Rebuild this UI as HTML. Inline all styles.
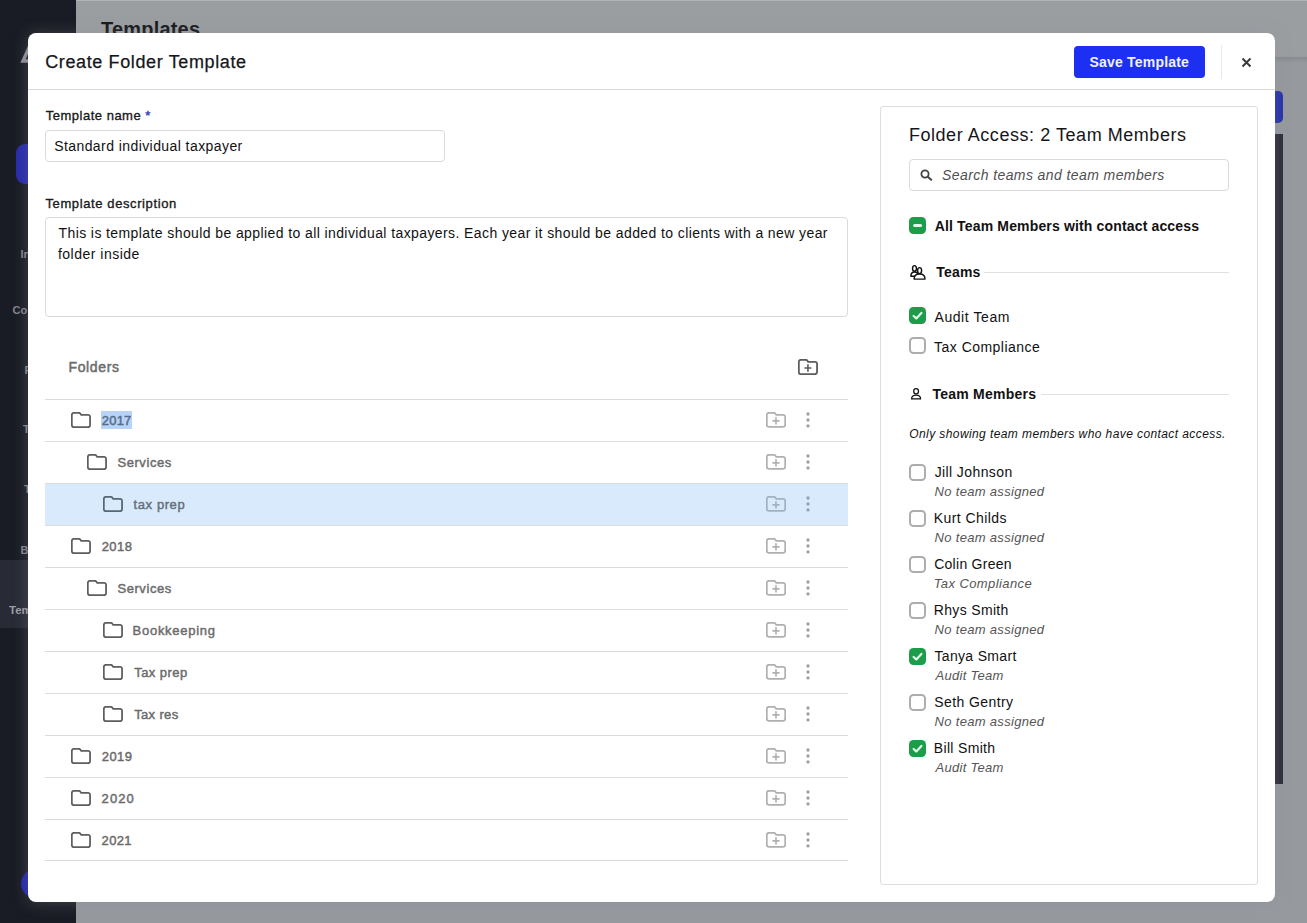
<!DOCTYPE html>
<html><head><meta charset="utf-8"><title>Create Folder Template</title>
<style>
*{box-sizing:border-box;margin:0;padding:0}
html,body{width:1307px;height:923px;overflow:hidden}
body{font-family:"Liberation Sans",sans-serif;position:relative;background:#96999e;color:#1c1c1c}
.abs,.t,.fi,.cb,.ln{position:absolute}
.t{white-space:nowrap;line-height:1}
.side{left:0;top:0;width:76px;height:923px;background:#1a1c25}
.bghead{left:76px;top:0;width:1231px;height:57px;background:#9b9ea1}
.bgshadow{left:76px;top:57px;width:1231px;height:6px;background:linear-gradient(180deg,#878a8e,#96999e)}
.modal{left:28px;top:33px;width:1247px;height:868.7px;background:#fff;border-radius:8px;box-shadow:0 1px 16px rgba(140,142,150,.34)}
.ln{background:#dcdcdc;height:1px}
.cb{width:17px;height:17px;border-radius:4.5px}
.cb.off{border:2px solid #adadad;background:#fff}
.cb.on{background:#1b9d4a}
.cb svg{display:block}
.row{position:absolute;left:45px;width:803px;height:42px;border-top:1px solid #dcdcdc}
</style></head><body>
<div class="abs side"></div>
<div class="abs bghead"></div>
<div class="abs bgshadow"></div>
<div class="abs" style="left:76px;top:0;width:1231px;height:1px;background:#b1b3b5"></div>
<div class="t" style="left:101px;top:19px;font-size:20px;font-weight:700;color:#17181c;letter-spacing:0.2px">Templates</div>
<div class="abs" style="left:16px;top:144px;width:30px;height:40px;background:#272ca9;border-radius:9px"></div>
<div class="abs" style="left:0;top:560px;width:76px;height:68px;background:#282a35"></div>
<div class="abs" style="left:20.8px;top:869px;width:29px;height:29px;background:#2326a8;border-radius:15px"></div>
<div class="abs" style="left:1260px;top:91px;width:23px;height:32px;background:#2531ad;border-radius:5px"></div>
<div class="abs" style="left:1260px;top:134px;width:23px;height:650px;background:#2a2b36"></div>

<div class="t" style="left:20.5px;top:249px;font-size:11px;font-weight:700;color:#85868d">In</div>
<div class="t" style="left:12.5px;top:305px;font-size:11px;font-weight:700;color:#85868d">Co</div>
<div class="t" style="left:24.5px;top:365px;font-size:11px;font-weight:700;color:#85868d">F</div>
<div class="t" style="left:23px;top:424px;font-size:11px;font-weight:700;color:#85868d">T</div>
<div class="t" style="left:24px;top:484px;font-size:11px;font-weight:700;color:#85868d">T</div>
<div class="t" style="left:20.5px;top:545px;font-size:11px;font-weight:700;color:#85868d">B</div>
<div class="t" style="left:9px;top:604.5px;font-size:11.5px;font-weight:700;color:#9d9ea4">Tem</div>
<svg class="fi" style="left:20px;top:40px" width="14" height="24" viewBox="0 0 14 24"><path d="M12 1 L3 21 H12" fill="none" stroke="#8f9097" stroke-width="3.4"/></svg>

<div class="abs modal"></div>
<div class="t" id="title" style="left:45.25px;top:53px;font-size:18px;color:#15161a;letter-spacing:0.620px;-webkit-text-stroke:0.25px currentColor">Create Folder Template</div>
<div class="ln" style="left:28px;top:89px;width:1247px;background:#d9d9d9"></div>
<div class="abs" style="left:1074px;top:46px;width:131px;height:32px;background:#1c2ff3;border-radius:4px"></div>
<div class="t" id="save" style="left:1089.53px;top:55px;font-size:14px;color:#f1f2ff;letter-spacing:0.198px;font-weight:700">Save Template</div>
<div class="abs" style="left:1221px;top:45px;width:1px;height:34px;background:#e9e9e9"></div>
<svg class="fi" style="left:1241px;top:57px" width="11" height="11" viewBox="0 0 11 11"><path d="M1.5 1.5 L9.5 9.5 M9.5 1.5 L1.5 9.5" stroke="#3a3a3a" stroke-width="2" fill="none"/></svg>

<div class="t" id="lbl1" style="left:45.77px;top:109px;font-size:13px;color:#1a1a1a;letter-spacing:0.502px;-webkit-text-stroke:0.35px currentColor">Template name <span style="color:#2b35b8">*</span></div>
<div class="abs" style="left:45px;top:130px;width:400px;height:32px;border:1px solid #dadada;border-radius:4px"></div>
<div class="t" id="inp1" style="left:54.17px;top:139px;font-size:14px;color:#111;letter-spacing:0.424px">Standard individual taxpayer</div>
<div class="t" id="lbl2" style="left:45.48px;top:197px;font-size:13px;color:#1a1a1a;letter-spacing:0.607px;-webkit-text-stroke:0.35px currentColor">Template description</div>
<div class="abs" style="left:45px;top:217px;width:803px;height:100px;border:1px solid #dadada;border-radius:4px"></div>
<div class="t" id="ta1" style="left:58.52px;top:226px;font-size:14px;color:#111;letter-spacing:0.403px">This is template should be applied to all individual taxpayers. Each year it should be added to clients with a new year</div>
<div class="t" id="ta2" style="left:57.95px;top:247px;font-size:14px;color:#111;letter-spacing:0.498px">folder inside</div>
<div class="t" id="folders" style="left:68.53px;top:360px;font-size:14px;color:#6c6c6c;letter-spacing:0.633px;-webkit-text-stroke:0.5px currentColor">Folders</div>
<svg class="fi" style="left:798.3px;top:359px" width="19.9" height="16" viewBox="0 0 19.5 15.2" preserveAspectRatio="none"><path d="M0.8 3 Q0.8 0.8 3 0.8 H7.6 Q8.5 0.8 9 1.45 L10 2.75 H16.5 Q18.7 2.7 18.7 4.9 V12.2 Q18.7 14.4 16.5 14.4 H3 Q0.8 14.4 0.8 12.2 Z" fill="none" stroke="#5c5c5c" stroke-width="1.8" stroke-linejoin="round"/><path d="M9.75 5.1 V12 M6.3 8.55 H13.2" stroke="#5c5c5c" stroke-width="1.6" fill="none"/></svg>
<div class="row" style="top:399px;"></div>
<svg class="fi" style="left:71.3px;top:412.1px" width="19.9" height="16.1" viewBox="0 0 19.5 15.2" preserveAspectRatio="none"><path d="M0.8 3 Q0.8 0.8 3 0.8 H7.6 Q8.5 0.8 9 1.45 L10 2.75 H16.5 Q18.7 2.7 18.7 4.9 V12.2 Q18.7 14.4 16.5 14.4 H3 Q0.8 14.4 0.8 12.2 Z" fill="none" stroke="#5e5e5e" stroke-width="1.75" stroke-linejoin="round"/></svg>
<div class="abs" style="left:101px;top:411.2px;width:30.8px;height:17.6px;background:#b7d3f7"></div>
<div class="t" id="r0" style="left:101.72px;top:413.5px;font-size:13px;color:#566c88;letter-spacing:0.225px;-webkit-text-stroke:0.45px currentColor">2017</div>
<svg class="fi" style="left:766.2px;top:412.3px" width="20" height="15.8" viewBox="0 0 19.5 15.2" preserveAspectRatio="none"><path d="M0.8 3 Q0.8 0.8 3 0.8 H7.6 Q8.5 0.8 9 1.45 L10 2.75 H16.5 Q18.7 2.7 18.7 4.9 V12.2 Q18.7 14.4 16.5 14.4 H3 Q0.8 14.4 0.8 12.2 Z" fill="none" stroke="#b0b0b0" stroke-width="1.7" stroke-linejoin="round"/><path d="M9.75 5.1 V12 M6.3 8.55 H13.2" stroke="#b0b0b0" stroke-width="1.6" fill="none"/></svg>
<svg class="fi" style="left:806px;top:412px" width="4" height="16" viewBox="0 0 4 16"><circle cx="2" cy="2" r="1.65" fill="#a0a0a0"/><circle cx="2" cy="8" r="1.65" fill="#a0a0a0"/><circle cx="2" cy="13.9" r="1.65" fill="#a0a0a0"/></svg>
<div class="row" style="top:441px;"></div>
<svg class="fi" style="left:87.3px;top:454.1px" width="19.9" height="16.1" viewBox="0 0 19.5 15.2" preserveAspectRatio="none"><path d="M0.8 3 Q0.8 0.8 3 0.8 H7.6 Q8.5 0.8 9 1.45 L10 2.75 H16.5 Q18.7 2.7 18.7 4.9 V12.2 Q18.7 14.4 16.5 14.4 H3 Q0.8 14.4 0.8 12.2 Z" fill="none" stroke="#5e5e5e" stroke-width="1.75" stroke-linejoin="round"/></svg>
<div class="t" id="r1" style="left:117.42px;top:455.5px;font-size:13px;color:#6b6b6b;letter-spacing:0.579px;-webkit-text-stroke:0.45px currentColor">Services</div>
<svg class="fi" style="left:766.2px;top:454.3px" width="20" height="15.8" viewBox="0 0 19.5 15.2" preserveAspectRatio="none"><path d="M0.8 3 Q0.8 0.8 3 0.8 H7.6 Q8.5 0.8 9 1.45 L10 2.75 H16.5 Q18.7 2.7 18.7 4.9 V12.2 Q18.7 14.4 16.5 14.4 H3 Q0.8 14.4 0.8 12.2 Z" fill="none" stroke="#b0b0b0" stroke-width="1.7" stroke-linejoin="round"/><path d="M9.75 5.1 V12 M6.3 8.55 H13.2" stroke="#b0b0b0" stroke-width="1.6" fill="none"/></svg>
<svg class="fi" style="left:806px;top:454px" width="4" height="16" viewBox="0 0 4 16"><circle cx="2" cy="2" r="1.65" fill="#a0a0a0"/><circle cx="2" cy="8" r="1.65" fill="#a0a0a0"/><circle cx="2" cy="13.9" r="1.65" fill="#a0a0a0"/></svg>
<div class="row" style="top:483px;background:#d9eafc;"></div>
<svg class="fi" style="left:103.3px;top:496.1px" width="19.9" height="16.1" viewBox="0 0 19.5 15.2" preserveAspectRatio="none"><path d="M0.8 3 Q0.8 0.8 3 0.8 H7.6 Q8.5 0.8 9 1.45 L10 2.75 H16.5 Q18.7 2.7 18.7 4.9 V12.2 Q18.7 14.4 16.5 14.4 H3 Q0.8 14.4 0.8 12.2 Z" fill="none" stroke="#596676" stroke-width="1.75" stroke-linejoin="round"/></svg>
<div class="t" id="r2" style="left:133.60px;top:497.5px;font-size:13px;color:#66707c;letter-spacing:0.582px;-webkit-text-stroke:0.45px currentColor">tax prep</div>
<svg class="fi" style="left:766.2px;top:496.3px" width="20" height="15.8" viewBox="0 0 19.5 15.2" preserveAspectRatio="none"><path d="M0.8 3 Q0.8 0.8 3 0.8 H7.6 Q8.5 0.8 9 1.45 L10 2.75 H16.5 Q18.7 2.7 18.7 4.9 V12.2 Q18.7 14.4 16.5 14.4 H3 Q0.8 14.4 0.8 12.2 Z" fill="none" stroke="#a3b1c2" stroke-width="1.7" stroke-linejoin="round"/><path d="M9.75 5.1 V12 M6.3 8.55 H13.2" stroke="#a3b1c2" stroke-width="1.6" fill="none"/></svg>
<svg class="fi" style="left:806px;top:496px" width="4" height="16" viewBox="0 0 4 16"><circle cx="2" cy="2" r="1.65" fill="#93a1b3"/><circle cx="2" cy="8" r="1.65" fill="#93a1b3"/><circle cx="2" cy="13.9" r="1.65" fill="#93a1b3"/></svg>
<div class="row" style="top:525px;"></div>
<svg class="fi" style="left:71.3px;top:538.1px" width="19.9" height="16.1" viewBox="0 0 19.5 15.2" preserveAspectRatio="none"><path d="M0.8 3 Q0.8 0.8 3 0.8 H7.6 Q8.5 0.8 9 1.45 L10 2.75 H16.5 Q18.7 2.7 18.7 4.9 V12.2 Q18.7 14.4 16.5 14.4 H3 Q0.8 14.4 0.8 12.2 Z" fill="none" stroke="#5e5e5e" stroke-width="1.75" stroke-linejoin="round"/></svg>
<div class="t" id="r3" style="left:101.72px;top:539.5px;font-size:13px;color:#6b6b6b;letter-spacing:0.417px;-webkit-text-stroke:0.45px currentColor">2018</div>
<svg class="fi" style="left:766.2px;top:538.3px" width="20" height="15.8" viewBox="0 0 19.5 15.2" preserveAspectRatio="none"><path d="M0.8 3 Q0.8 0.8 3 0.8 H7.6 Q8.5 0.8 9 1.45 L10 2.75 H16.5 Q18.7 2.7 18.7 4.9 V12.2 Q18.7 14.4 16.5 14.4 H3 Q0.8 14.4 0.8 12.2 Z" fill="none" stroke="#b0b0b0" stroke-width="1.7" stroke-linejoin="round"/><path d="M9.75 5.1 V12 M6.3 8.55 H13.2" stroke="#b0b0b0" stroke-width="1.6" fill="none"/></svg>
<svg class="fi" style="left:806px;top:538px" width="4" height="16" viewBox="0 0 4 16"><circle cx="2" cy="2" r="1.65" fill="#a0a0a0"/><circle cx="2" cy="8" r="1.65" fill="#a0a0a0"/><circle cx="2" cy="13.9" r="1.65" fill="#a0a0a0"/></svg>
<div class="row" style="top:567px;"></div>
<svg class="fi" style="left:87.3px;top:580.1px" width="19.9" height="16.1" viewBox="0 0 19.5 15.2" preserveAspectRatio="none"><path d="M0.8 3 Q0.8 0.8 3 0.8 H7.6 Q8.5 0.8 9 1.45 L10 2.75 H16.5 Q18.7 2.7 18.7 4.9 V12.2 Q18.7 14.4 16.5 14.4 H3 Q0.8 14.4 0.8 12.2 Z" fill="none" stroke="#5e5e5e" stroke-width="1.75" stroke-linejoin="round"/></svg>
<div class="t" id="r4" style="left:117.42px;top:581.5px;font-size:13px;color:#6b6b6b;letter-spacing:0.579px;-webkit-text-stroke:0.45px currentColor">Services</div>
<svg class="fi" style="left:766.2px;top:580.3px" width="20" height="15.8" viewBox="0 0 19.5 15.2" preserveAspectRatio="none"><path d="M0.8 3 Q0.8 0.8 3 0.8 H7.6 Q8.5 0.8 9 1.45 L10 2.75 H16.5 Q18.7 2.7 18.7 4.9 V12.2 Q18.7 14.4 16.5 14.4 H3 Q0.8 14.4 0.8 12.2 Z" fill="none" stroke="#b0b0b0" stroke-width="1.7" stroke-linejoin="round"/><path d="M9.75 5.1 V12 M6.3 8.55 H13.2" stroke="#b0b0b0" stroke-width="1.6" fill="none"/></svg>
<svg class="fi" style="left:806px;top:580px" width="4" height="16" viewBox="0 0 4 16"><circle cx="2" cy="2" r="1.65" fill="#a0a0a0"/><circle cx="2" cy="8" r="1.65" fill="#a0a0a0"/><circle cx="2" cy="13.9" r="1.65" fill="#a0a0a0"/></svg>
<div class="row" style="top:609px;"></div>
<svg class="fi" style="left:103.3px;top:622.1px" width="19.9" height="16.1" viewBox="0 0 19.5 15.2" preserveAspectRatio="none"><path d="M0.8 3 Q0.8 0.8 3 0.8 H7.6 Q8.5 0.8 9 1.45 L10 2.75 H16.5 Q18.7 2.7 18.7 4.9 V12.2 Q18.7 14.4 16.5 14.4 H3 Q0.8 14.4 0.8 12.2 Z" fill="none" stroke="#5e5e5e" stroke-width="1.75" stroke-linejoin="round"/></svg>
<div class="t" id="r5" style="left:132.62px;top:623.5px;font-size:13px;color:#6b6b6b;letter-spacing:0.718px;-webkit-text-stroke:0.45px currentColor">Bookkeeping</div>
<svg class="fi" style="left:766.2px;top:622.3px" width="20" height="15.8" viewBox="0 0 19.5 15.2" preserveAspectRatio="none"><path d="M0.8 3 Q0.8 0.8 3 0.8 H7.6 Q8.5 0.8 9 1.45 L10 2.75 H16.5 Q18.7 2.7 18.7 4.9 V12.2 Q18.7 14.4 16.5 14.4 H3 Q0.8 14.4 0.8 12.2 Z" fill="none" stroke="#b0b0b0" stroke-width="1.7" stroke-linejoin="round"/><path d="M9.75 5.1 V12 M6.3 8.55 H13.2" stroke="#b0b0b0" stroke-width="1.6" fill="none"/></svg>
<svg class="fi" style="left:806px;top:622px" width="4" height="16" viewBox="0 0 4 16"><circle cx="2" cy="2" r="1.65" fill="#a0a0a0"/><circle cx="2" cy="8" r="1.65" fill="#a0a0a0"/><circle cx="2" cy="13.9" r="1.65" fill="#a0a0a0"/></svg>
<div class="row" style="top:651px;"></div>
<svg class="fi" style="left:103.3px;top:664.1px" width="19.9" height="16.1" viewBox="0 0 19.5 15.2" preserveAspectRatio="none"><path d="M0.8 3 Q0.8 0.8 3 0.8 H7.6 Q8.5 0.8 9 1.45 L10 2.75 H16.5 Q18.7 2.7 18.7 4.9 V12.2 Q18.7 14.4 16.5 14.4 H3 Q0.8 14.4 0.8 12.2 Z" fill="none" stroke="#5e5e5e" stroke-width="1.75" stroke-linejoin="round"/></svg>
<div class="t" id="r6" style="left:134.18px;top:665.5px;font-size:13px;color:#6b6b6b;letter-spacing:0.461px;-webkit-text-stroke:0.45px currentColor">Tax prep</div>
<svg class="fi" style="left:766.2px;top:664.3px" width="20" height="15.8" viewBox="0 0 19.5 15.2" preserveAspectRatio="none"><path d="M0.8 3 Q0.8 0.8 3 0.8 H7.6 Q8.5 0.8 9 1.45 L10 2.75 H16.5 Q18.7 2.7 18.7 4.9 V12.2 Q18.7 14.4 16.5 14.4 H3 Q0.8 14.4 0.8 12.2 Z" fill="none" stroke="#b0b0b0" stroke-width="1.7" stroke-linejoin="round"/><path d="M9.75 5.1 V12 M6.3 8.55 H13.2" stroke="#b0b0b0" stroke-width="1.6" fill="none"/></svg>
<svg class="fi" style="left:806px;top:664px" width="4" height="16" viewBox="0 0 4 16"><circle cx="2" cy="2" r="1.65" fill="#a0a0a0"/><circle cx="2" cy="8" r="1.65" fill="#a0a0a0"/><circle cx="2" cy="13.9" r="1.65" fill="#a0a0a0"/></svg>
<div class="row" style="top:693px;"></div>
<svg class="fi" style="left:103.3px;top:706.1px" width="19.9" height="16.1" viewBox="0 0 19.5 15.2" preserveAspectRatio="none"><path d="M0.8 3 Q0.8 0.8 3 0.8 H7.6 Q8.5 0.8 9 1.45 L10 2.75 H16.5 Q18.7 2.7 18.7 4.9 V12.2 Q18.7 14.4 16.5 14.4 H3 Q0.8 14.4 0.8 12.2 Z" fill="none" stroke="#5e5e5e" stroke-width="1.75" stroke-linejoin="round"/></svg>
<div class="t" id="r7" style="left:134.18px;top:707.5px;font-size:13px;color:#6b6b6b;letter-spacing:0.350px;-webkit-text-stroke:0.45px currentColor">Tax res</div>
<svg class="fi" style="left:766.2px;top:706.3px" width="20" height="15.8" viewBox="0 0 19.5 15.2" preserveAspectRatio="none"><path d="M0.8 3 Q0.8 0.8 3 0.8 H7.6 Q8.5 0.8 9 1.45 L10 2.75 H16.5 Q18.7 2.7 18.7 4.9 V12.2 Q18.7 14.4 16.5 14.4 H3 Q0.8 14.4 0.8 12.2 Z" fill="none" stroke="#b0b0b0" stroke-width="1.7" stroke-linejoin="round"/><path d="M9.75 5.1 V12 M6.3 8.55 H13.2" stroke="#b0b0b0" stroke-width="1.6" fill="none"/></svg>
<svg class="fi" style="left:806px;top:706px" width="4" height="16" viewBox="0 0 4 16"><circle cx="2" cy="2" r="1.65" fill="#a0a0a0"/><circle cx="2" cy="8" r="1.65" fill="#a0a0a0"/><circle cx="2" cy="13.9" r="1.65" fill="#a0a0a0"/></svg>
<div class="row" style="top:735px;"></div>
<svg class="fi" style="left:71.3px;top:748.1px" width="19.9" height="16.1" viewBox="0 0 19.5 15.2" preserveAspectRatio="none"><path d="M0.8 3 Q0.8 0.8 3 0.8 H7.6 Q8.5 0.8 9 1.45 L10 2.75 H16.5 Q18.7 2.7 18.7 4.9 V12.2 Q18.7 14.4 16.5 14.4 H3 Q0.8 14.4 0.8 12.2 Z" fill="none" stroke="#5e5e5e" stroke-width="1.75" stroke-linejoin="round"/></svg>
<div class="t" id="r8" style="left:101.72px;top:749.5px;font-size:13px;color:#6b6b6b;letter-spacing:0.458px;-webkit-text-stroke:0.45px currentColor">2019</div>
<svg class="fi" style="left:766.2px;top:748.3px" width="20" height="15.8" viewBox="0 0 19.5 15.2" preserveAspectRatio="none"><path d="M0.8 3 Q0.8 0.8 3 0.8 H7.6 Q8.5 0.8 9 1.45 L10 2.75 H16.5 Q18.7 2.7 18.7 4.9 V12.2 Q18.7 14.4 16.5 14.4 H3 Q0.8 14.4 0.8 12.2 Z" fill="none" stroke="#b0b0b0" stroke-width="1.7" stroke-linejoin="round"/><path d="M9.75 5.1 V12 M6.3 8.55 H13.2" stroke="#b0b0b0" stroke-width="1.6" fill="none"/></svg>
<svg class="fi" style="left:806px;top:748px" width="4" height="16" viewBox="0 0 4 16"><circle cx="2" cy="2" r="1.65" fill="#a0a0a0"/><circle cx="2" cy="8" r="1.65" fill="#a0a0a0"/><circle cx="2" cy="13.9" r="1.65" fill="#a0a0a0"/></svg>
<div class="row" style="top:777px;"></div>
<svg class="fi" style="left:71.3px;top:790.1px" width="19.9" height="16.1" viewBox="0 0 19.5 15.2" preserveAspectRatio="none"><path d="M0.8 3 Q0.8 0.8 3 0.8 H7.6 Q8.5 0.8 9 1.45 L10 2.75 H16.5 Q18.7 2.7 18.7 4.9 V12.2 Q18.7 14.4 16.5 14.4 H3 Q0.8 14.4 0.8 12.2 Z" fill="none" stroke="#5e5e5e" stroke-width="1.75" stroke-linejoin="round"/></svg>
<div class="t" id="r9" style="left:101.62px;top:791.5px;font-size:13px;color:#6b6b6b;letter-spacing:1.050px;-webkit-text-stroke:0.45px currentColor">2020</div>
<svg class="fi" style="left:766.2px;top:790.3px" width="20" height="15.8" viewBox="0 0 19.5 15.2" preserveAspectRatio="none"><path d="M0.8 3 Q0.8 0.8 3 0.8 H7.6 Q8.5 0.8 9 1.45 L10 2.75 H16.5 Q18.7 2.7 18.7 4.9 V12.2 Q18.7 14.4 16.5 14.4 H3 Q0.8 14.4 0.8 12.2 Z" fill="none" stroke="#b0b0b0" stroke-width="1.7" stroke-linejoin="round"/><path d="M9.75 5.1 V12 M6.3 8.55 H13.2" stroke="#b0b0b0" stroke-width="1.6" fill="none"/></svg>
<svg class="fi" style="left:806px;top:790px" width="4" height="16" viewBox="0 0 4 16"><circle cx="2" cy="2" r="1.65" fill="#a0a0a0"/><circle cx="2" cy="8" r="1.65" fill="#a0a0a0"/><circle cx="2" cy="13.9" r="1.65" fill="#a0a0a0"/></svg>
<div class="row" style="top:819px;"></div>
<svg class="fi" style="left:71.3px;top:832.1px" width="19.9" height="16.1" viewBox="0 0 19.5 15.2" preserveAspectRatio="none"><path d="M0.8 3 Q0.8 0.8 3 0.8 H7.6 Q8.5 0.8 9 1.45 L10 2.75 H16.5 Q18.7 2.7 18.7 4.9 V12.2 Q18.7 14.4 16.5 14.4 H3 Q0.8 14.4 0.8 12.2 Z" fill="none" stroke="#5e5e5e" stroke-width="1.75" stroke-linejoin="round"/></svg>
<div class="t" id="r10" style="left:101.62px;top:833.5px;font-size:13px;color:#6b6b6b;letter-spacing:0.292px;-webkit-text-stroke:0.45px currentColor">2021</div>
<svg class="fi" style="left:766.2px;top:832.3px" width="20" height="15.8" viewBox="0 0 19.5 15.2" preserveAspectRatio="none"><path d="M0.8 3 Q0.8 0.8 3 0.8 H7.6 Q8.5 0.8 9 1.45 L10 2.75 H16.5 Q18.7 2.7 18.7 4.9 V12.2 Q18.7 14.4 16.5 14.4 H3 Q0.8 14.4 0.8 12.2 Z" fill="none" stroke="#b0b0b0" stroke-width="1.7" stroke-linejoin="round"/><path d="M9.75 5.1 V12 M6.3 8.55 H13.2" stroke="#b0b0b0" stroke-width="1.6" fill="none"/></svg>
<svg class="fi" style="left:806px;top:832px" width="4" height="16" viewBox="0 0 4 16"><circle cx="2" cy="2" r="1.65" fill="#a0a0a0"/><circle cx="2" cy="8" r="1.65" fill="#a0a0a0"/><circle cx="2" cy="13.9" r="1.65" fill="#a0a0a0"/></svg>
<div class="ln" style="left:45px;top:860px;width:803px"></div>
<div class="abs" style="left:880px;top:106px;width:378px;height:779px;border:1px solid #dedede;border-radius:3px"></div>
<div class="t" id="fa" style="left:908.90px;top:126px;font-size:18px;color:#15161a;letter-spacing:0.549px">Folder Access: 2 Team Members</div>
<div class="abs" style="left:909px;top:159px;width:320px;height:32px;border:1px solid #dadada;border-radius:4px"></div>
<svg class="fi" style="left:920px;top:169.3px" width="12.5" height="12" viewBox="0 0 12.5 12"><circle cx="5" cy="5" r="3.6" fill="none" stroke="#444" stroke-width="1.8"/><path d="M7.8 7.8 L11.2 10.8" stroke="#444" stroke-width="2" stroke-linecap="round"/></svg>
<div class="t" id="ph" style="left:942.02px;top:168px;font-size:14px;color:#505050;letter-spacing:0.410px;font-style:italic">Search teams and team members</div>
<div class="cb on" style="left:909px;top:217px"><svg width="17" height="17" viewBox="0 0 17 17"><path d="M5.6 8.6 H11.6" fill="none" stroke="#e8f5ec" stroke-width="3" stroke-linecap="round"/></svg></div>
<div class="t" id="all" style="left:934.73px;top:219px;font-size:14px;color:#111;letter-spacing:0.155px;font-weight:700">All Team Members with contact access</div>
<svg class="fi" style="left:909px;top:264px" width="18" height="17" viewBox="0 0 18 17"><ellipse cx="5.5" cy="4.4" rx="1.95" ry="2.8" fill="#fff" stroke="#111" stroke-width="1.45"/><path d="M1.9 12.2 Q1.9 8 5.6 8 Q9.3 8 9.3 12.2 Z" fill="none" stroke="#111" stroke-width="1.45" stroke-linejoin="round"/><ellipse cx="10.6" cy="6.6" rx="2.0" ry="3.0" fill="#fff" stroke="#111" stroke-width="1.45"/><path d="M5.1 15.1 Q5.1 9.9 10.6 9.9 Q16 9.9 16 15.1 Z" fill="#fff" stroke="#111" stroke-width="1.45" stroke-linejoin="round"/></svg>
<div class="t" id="teams" style="left:936.27px;top:265px;font-size:14px;color:#111;letter-spacing:0.194px;font-weight:700">Teams</div>
<div class="ln" style="left:984px;top:272px;width:245px;background:#e0e0e0"></div>
<div class="cb on" style="left:909px;top:307px"><svg width="17" height="17" viewBox="0 0 17 17"><path d="M4.6 9 L7.3 11.4 L12.4 5.9" fill="none" stroke="#e4ffea" stroke-width="2.2" stroke-linecap="round" stroke-linejoin="round"/></svg></div>
<div class="t" id="audit" style="left:934.50px;top:310px;font-size:14px;color:#111;letter-spacing:0.569px">Audit Team</div>
<div class="cb off" style="left:909px;top:337px"></div>
<div class="t" id="taxc" style="left:934.12px;top:340px;font-size:14px;color:#111;letter-spacing:0.460px">Tax Compliance</div>
<svg class="fi" style="left:910px;top:387px" width="13" height="14" viewBox="0 0 13 14"><ellipse cx="6.1" cy="4.25" rx="2.4" ry="2.65" fill="none" stroke="#111" stroke-width="1.25"/><path d="M1.6 11.9 Q1.6 8 6.1 8 Q10.6 8 10.6 11.9 Z" fill="none" stroke="#111" stroke-width="1.25" stroke-linejoin="round"/></svg>
<div class="t" id="tm" style="left:932.38px;top:387px;font-size:14px;color:#111;letter-spacing:0.243px;font-weight:700">Team Members</div>
<div class="ln" style="left:1041px;top:394px;width:188px;background:#e0e0e0"></div>
<div class="t" id="only" style="left:909.27px;top:428px;font-size:12px;color:#111;letter-spacing:0.408px;font-style:italic">Only showing team members who have contact access.</div>
<div class="cb off" style="left:909px;top:464px"></div>
<div class="t" id="m0" style="left:934.65px;top:465.3px;font-size:14px;color:#111;letter-spacing:0.400px">Jill Johnson</div>
<div class="t" id="s0" style="left:934.52px;top:485px;font-size:13px;color:#555;letter-spacing:0.317px;font-style:italic">No team assigned</div>
<div class="cb off" style="left:909px;top:510px"></div>
<div class="t" id="m1" style="left:933.77px;top:511.3px;font-size:14px;color:#111;letter-spacing:0.433px">Kurt Childs</div>
<div class="t" id="s1" style="left:934.52px;top:531px;font-size:13px;color:#555;letter-spacing:0.317px;font-style:italic">No team assigned</div>
<div class="cb off" style="left:909px;top:556px"></div>
<div class="t" id="m2" style="left:934.15px;top:557.3px;font-size:14px;color:#111;letter-spacing:0.280px">Colin Green</div>
<div class="t" id="s2" style="left:933.65px;top:577px;font-size:13px;color:#555;letter-spacing:0.415px;font-style:italic">Tax Compliance</div>
<div class="cb off" style="left:909px;top:602px"></div>
<div class="t" id="m3" style="left:933.77px;top:603.3px;font-size:14px;color:#111;letter-spacing:0.333px">Rhys Smith</div>
<div class="t" id="s3" style="left:934.52px;top:623px;font-size:13px;color:#555;letter-spacing:0.317px;font-style:italic">No team assigned</div>
<div class="cb on" style="left:909px;top:648px"><svg width="17" height="17" viewBox="0 0 17 17"><path d="M4.6 9 L7.3 11.4 L12.4 5.9" fill="none" stroke="#e4ffea" stroke-width="2.2" stroke-linecap="round" stroke-linejoin="round"/></svg></div>
<div class="t" id="m4" style="left:934.52px;top:649.3px;font-size:14px;color:#111;letter-spacing:0.318px">Tanya Smart</div>
<div class="t" id="s4" style="left:935.52px;top:669px;font-size:13px;color:#555;letter-spacing:0.294px;font-style:italic">Audit Team</div>
<div class="cb off" style="left:909px;top:694px"></div>
<div class="t" id="m5" style="left:934.27px;top:695.3px;font-size:14px;color:#111;letter-spacing:0.410px">Seth Gentry</div>
<div class="t" id="s5" style="left:934.52px;top:715px;font-size:13px;color:#555;letter-spacing:0.317px;font-style:italic">No team assigned</div>
<div class="cb on" style="left:909px;top:740px"><svg width="17" height="17" viewBox="0 0 17 17"><path d="M4.6 9 L7.3 11.4 L12.4 5.9" fill="none" stroke="#e4ffea" stroke-width="2.2" stroke-linecap="round" stroke-linejoin="round"/></svg></div>
<div class="t" id="m6" style="left:933.77px;top:741.3px;font-size:14px;color:#111;letter-spacing:0.336px">Bill Smith</div>
<div class="t" id="s6" style="left:935.52px;top:761px;font-size:13px;color:#555;letter-spacing:0.294px;font-style:italic">Audit Team</div>
</body></html>
